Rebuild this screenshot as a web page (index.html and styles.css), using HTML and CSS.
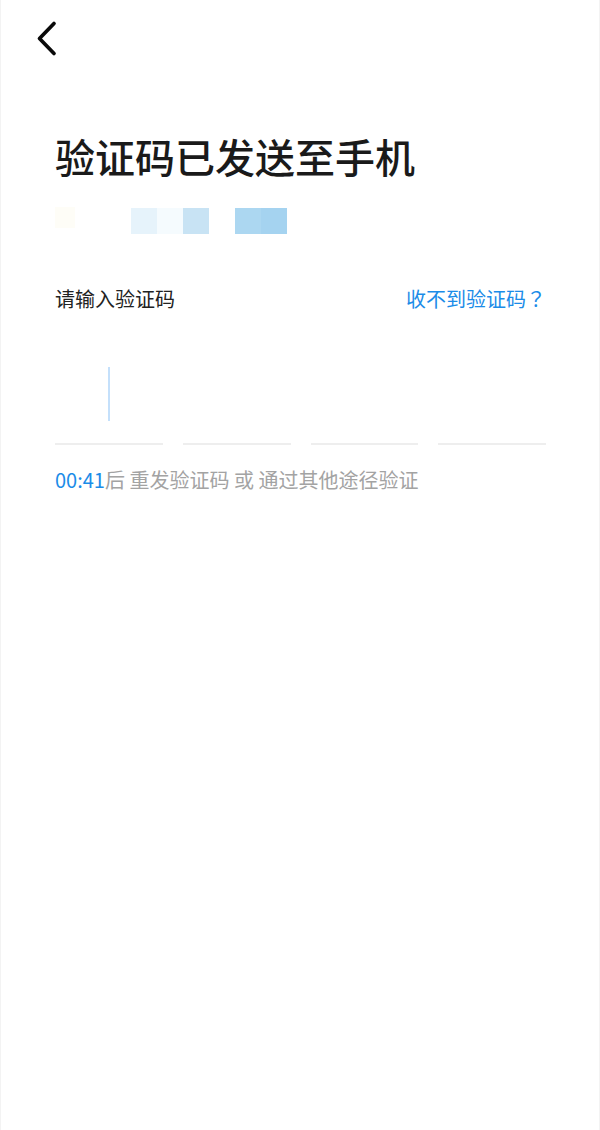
FILE: index.html
```html
<!DOCTYPE html>
<html lang="zh-CN">
<head>
<meta charset="utf-8">
<title>验证码</title>
<link rel="stylesheet" href="styles.css">
</head>
<body>
<div class="page">
  <header class="header">
    <svg class="back" width="30" height="50" viewBox="0 0 30 50" aria-hidden="true">
      <polyline points="24,8.5 9.5,23.5 24,38.5" fill="none" stroke="#0a0a0a" stroke-width="3.7" stroke-linecap="round" stroke-linejoin="round"/>
    </svg>
  </header>
  <main class="content">
    <h1 class="title">验证码已发送至手机</h1>
    <div class="masked">
      <span class="blot blot-warm"></span>
      <span class="gap-a"></span>
      <span class="px px1"></span><span class="px px2"></span><span class="px px3"></span>
      <span class="gap-b"></span>
      <span class="px px4"></span><span class="px px5"></span>
    </div>
    <div class="label-row">
      <span class="label">请输入验证码</span>
      <a class="help">收不到验证码<span class="qmark">？</span></a>
    </div>
    <div class="code-row">
      <div class="code-box"><span class="cursor"></span></div>
      <div class="code-box"></div>
      <div class="code-box"></div>
      <div class="code-box"></div>
    </div>
    <p class="resend"><span class="timer">00:41</span>后 重发验证码 或 通过其他途径验证</p>
  </main>
</div>
</body>
</html>
```
FILE: styles.css
```css
html, body {
  margin: 0;
  padding: 0;
  background: #ffffff;
}
.page {
  width: 600px;
  height: 1130px;
  box-sizing: border-box;
  border-left: 1px solid #f3f3f3;
  border-right: 1px solid #f3f3f3;
  background: #ffffff;
  font-family: "Noto Sans CJK SC", "Noto Sans", sans-serif;
  overflow: hidden;
}
.header {
  height: 80px;
  box-sizing: border-box;
  padding: 15px 0 0 29px;
}
.back {
  display: block;
}
.content {
  padding: 0 53px 0 54px;
}
.title {
  margin: 52px 0 0 0;
  font-size: 40px;
  line-height: 48px;
  font-weight: 500;
  color: #1a1a1a;
}
.masked {
  margin-top: 28px;
  height: 26px;
  display: flex;
}
.blot {
  width: 20px;
  height: 21px;
  margin-top: -1px;
}
.blot-warm {
  background: #fefdf7;
}
.gap-a {
  width: 56px;
}
.gap-b {
  width: 26px;
}
.px {
  width: 26px;
  height: 26px;
}
.px1 { background: #e6f3fb; }
.px2 { background: #f5fbfe; }
.px3 { background: #c8e3f4; }
.px4 { background: #acd7f1; }
.px5 { background: #a5d3f0; }
.label-row {
  margin-top: 51px;
  display: flex;
  justify-content: space-between;
  align-items: center;
  height: 28px;
  font-size: 20px;
  line-height: 28px;
}
.label {
  color: #222222;
}
.help {
  color: #1b8ce8;
}
.qmark {
  display: inline-block;
  width: 20px;
  text-align: center;
  font-family: "Noto Sans CJK JP", "Noto Sans CJK SC", sans-serif;
}
.code-row {
  display: flex;
  gap: 20px;
}
.code-box {
  flex: 1;
  height: 130px;
  box-sizing: content-box;
  border-bottom: 2px solid #eeeeee;
  display: flex;
  justify-content: center;
  align-items: flex-start;
}
.cursor {
  display: block;
  width: 2.5px;
  height: 54px;
  margin-top: 54px;
  background: #c4e0fb;
}
.resend {
  margin: 21px 0 0 0;
  font-size: 20px;
  line-height: 28px;
  color: #a3a3a3;
}
.timer {
  color: #1b8ce8;
}
```
